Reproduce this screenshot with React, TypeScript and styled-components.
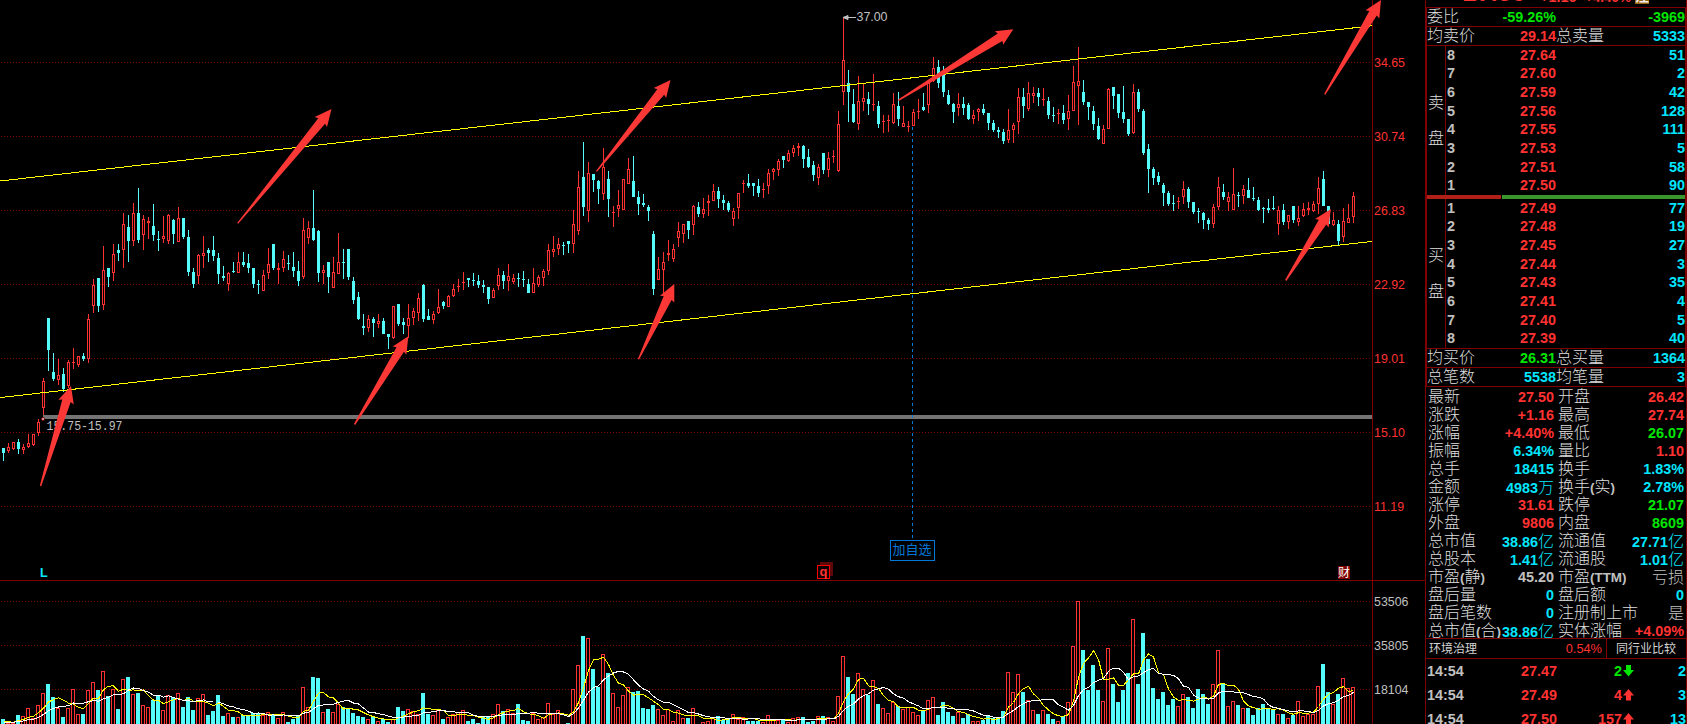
import React from "react";
import styled, { createGlobalStyle } from "styled-components";

const C = {
  line: "#800000",
  red: "#ff3232",
  cyan: "#54fcfc",
  aqua: "#00e6ff",
  green: "#00e600",
  grey: "#c0c0c0",
  yellow: "#ffff00",
  arrow: "#fb3836",
  blue: "#0078d7",
};

const latin = `"Liberation Sans", Arial`;
const cjk = `"Noto Sans CJK SC", sans-serif`;

const GlobalStyle = createGlobalStyle`
  html, body { margin: 0; background: #000; overflow: hidden; }
  * { box-sizing: border-box; }
`;

/* ---------- chart data ---------- */

/* Each block lists candles as "kind high open/close-top body-bottom low", in thirds of a
   pixel below `top`. r = rising, c = falling. */
const candleBlocks: { top: number; rows: string }[] = [
  {
    top: 180,
    rows: `c 804 804 819 843,r 789 801 813 819,r 786 786 807 810,c 777 786 807 822,r 792 801 810 822,r 762 789 801 804,r 762 762 795 798,r 717 726 759 768,r 594 603 684 705,c 414 414 510 573,
c 519 576 597 603,r 537 585 600 615,c 564 582 627 636,r 540 546 618 624,r 504 546 549 567,r 528 528 555 561,c 519 528 537 543,r 402 417 537 549,r 297 315 378 399,c 294 294 378 396,
r 198 270 375 390,c 264 264 291 321,r 192 222 279 303,c 192 210 219 243,r 99 132 210 264,c 105 141 183 246,r 69 99 183 198,c 24 99 180 189,r 105 117 165 210,r 111 123 129 177,
c 72 138 165 183,c 153 177 180 213,r 108 168 177 189,r 102 105 183 192,c 117 120 162 192,r 81 114 186 186,c 114 114 171 177,c 150 171 276 288,c 264 276 312 324,r 222 225 288 312,
r 168 219 228 264,c 204 210 219 246,c 168 210 228 243,c 219 234 282 312,c 258 288 294 303,r 276 279 312 333,c 246 273 276 279,r 216 246 279 279,c 216 246 255 261,c 222 249 264 279,
c 264 264 312 324,c 300 312 315 342,r 270 285 333 333,r 204 252 279 297,c 192 192 264 270,r 249 264 270 312,r 213 237 264 276,c 225 249 252 270,c 216 261 273 291,c 243 273 303 318,
r 114 150 291 297,r 123 144 174 192,c 30 144 180 183,c 150 153 279 306,r 255 270 279 312,c 246 246 291 339,r 231 276 324 324,r 159 246 282 282,c 207 246 249 297,c 207 207 291 300,
c 291 303 360 372,c 336 351 417 420,c 402 438 444 465,r 405 417 444 456,c 411 417 429 471,r 402 423 432 444,c 414 423 462 462,c 462 462 471 507,r 378 378 474 477,c 372 372 432 438,
c 414 426 435 462,r 372 414 438 474,r 384 393 414 435,r 339 354 399 423,c 312 315 417 426,c 387 408 420 420,r 393 402 420 432,r 327 381 399 402,c 363 366 378 387,r 345 348 381 381,
r 312 327 348 351,r 297 318 321 336,r 276 306 309 330,c 294 294 300 321,c 279 300 303 318,c 285 303 315 324,c 300 315 321 339,c 321 321 357 372,r 324 330 354 354,r 264 285 318 330,
c 273 285 303 327,r 252 288 303 333,r 282 294 306 312,c 279 294 297 321,c 273 297 300 321,c 297 312 339 339,r 264 309 339 339,r 285 291 315 321,r 267 273 294 318,r 192 210 273 285,
r 168 207 216 231,r 174 192 207 225,c 186 195 198 225,c 183 183 192 219`,
  },
  {
    top: 100,
    rows: `r 330 372 432 459,r 213 261 393 405,c 126 231 321 348,r 186 219 333 366,c 222 222 240 276,c 240 243 267 312,r 144 201 282 300,c 213 237 297 351,r 318 336 339 381,r 270 315 327 351,
r 237 237 330 330,r 174 207 252 252,c 168 243 291 291,c 273 291 312 345,c 282 309 315 321,c 315 321 333 363,c 393 402 567 585,r 471 507 540 540,r 456 486 510 585,r 420 459 465 483,
r 432 447 477 486,r 366 393 414 441,r 372 372 402 429,c 363 363 390 417,r 315 318 375 405,c 306 321 342 351,r 294 327 342 354,r 285 303 309 348,r 252 273 303 303,c 261 273 297 324,
c 285 300 309 330,c 303 309 330 336,r 324 333 357 378,r 279 279 324 357,r 240 249 252 279,c 222 249 258 264,c 249 249 258 288,c 237 258 279 291,r 249 267 270 294,r 207 219 258 282,
r 204 207 216 240,r 177 183 210 228,c 168 168 180 204,r 150 159 183 186,r 135 144 159 171,r 129 138 144 168,c 135 138 177 204,c 147 171 201 204,c 183 195 225 243,r 192 201 234 255,
c 159 159 210 222,r 156 174 210 231,r 150 168 171 189,r 33 72 213 216`,
  },
  {
    top: 0,
    rows: `r 54 180 276 315,c 210 249 276 366,c 267 312 366 369,r 228 303 372 390,r 252 294 306 333,c 276 297 312 345,r 222 312 315 333,c 303 318 372 384,r 345 363 366 399,r 345 360 363 396,
r 279 312 369 372,c 276 318 357 378,r 318 369 381 381,r 363 378 381 396,r 327 336 378 378,r 297 333 336 357,c 279 321 330 333,r 249 249 315 339,r 171 204 243 246,c 180 201 249 264,
c 198 225 276 291,c 270 285 312 315,c 309 312 336 369,r 279 312 324 348,c 291 312 324 345,c 309 315 357 360,r 330 345 357 372,r 324 327 336 363,c 312 327 339 345,c 339 339 369 390,
c 360 369 390 396,c 381 390 396 414,c 387 396 423 432,r 327 390 420 429,r 369 375 390 429,r 264 291 366 402,c 264 291 318 354,r 246 279 327 333,r 261 279 288 309,c 264 279 291 318,
r 264 297 300 318,c 291 303 345 357,c 321 345 348 366,r 327 339 342 372,c 315 339 360 372,r 285 333 357 390,r 198 246 333 333,r 141 243 258 375,c 240 276 306 315,c 306 306 321 360,
c 318 333 372 390,c 354 378 417 420,r 375 387 432 432,r 264 267 387 387,c 261 261 288 327,c 282 282 339 354,c 258 336 357 369,c 357 357 402 408,r 252 276 399 402,c 267 276 327 336`,
  },
  {
    top: 50,
    rows: `c 177 183 309 315,c 282 297 357 429,c 351 357 384 405,c 366 378 396 405,c 399 405 429 468,c 423 429 462 468,c 435 459 462 483,r 441 453 456 477,r 393 417 441 462,c 411 417 456 474,
c 456 456 486 492,c 474 483 486 519,c 486 489 510 537,c 504 510 522 540,r 462 471 522 534,r 381 411 471 480,c 402 426 441 450,r 426 441 456 483,r 354 432 480 480,c 426 435 438 471,
r 405 417 438 462,c 384 420 444 444,c 411 444 447 453,c 441 450 480 483,c 471 474 477 519,c 447 474 480 489,c 438 474 477 480,r 468 480 522 555,c 462 480 516 525,r 495 495 516 537,
c 468 468 510 519,r 468 504 516 528,r 459 477 498 501,r 456 474 480 495,r 453 462 483 486,r 381 414 462 492,c 363 387 468 468,c 468 468 522 522,r 486 510 525 528,c 510 522 573 585,
r 474 513 561 576,r 462 504 519 519,r 426 438 501 519`,
  },
];

type Candle = { up: boolean; high: number; top: number; bottom: number; low: number };

const candles: Candle[] = candleBlocks.flatMap(({ top, rows }) =>
  rows.split(",").map((row) => {
    const [kind, ...v] = row.trim().split(" ");
    const [high, bodyTop, bottom, low] = v.map((n) => Math.round(Number(n) / 3) + top);
    return { up: kind === "r", high, top: bodyTop, bottom, low };
  }),
);

/* Bar tops in thirds of a pixel below y=560. */
const volumeRows = `c477 r489 r489 c465 r468 r444 r474 r435 r399 c372 c411 r444 c471 r444 r387 r462 c462 r390 r366 c390 r333 c408 r387 c447 r357 c351 r402 c399 r435 r441
c420 c405 r450 r405 c411 r399 c441 c411 c450 r414 r402 c465 c453 c405 c468 r459 c471 r471 c465 c468 c460 c460 r465 r456 c465 r474 r456 c486 c477 c465
r381 r441 c351 c354 r456 c447 r456 r432 c441 c445 c459 c468 c471 r477 c471 r483 c477 c486 r477 c441 c453 r447 r453 r462 c399 c462 r465 r450 c477 r471
r462 r456 r450 c483 c477 c489 c468 c468 r462 r432 c453 r447 r459 c432 c480 c483 r459 r477 r471 r429 r462 r450 r492 c489 r387 r315 c228 r234 c327 c381
r282 c339 r399 r441 r405 r381 c396 c393 c444 c447 c435 r447 r465 r447 r483 r450 r474 c474 r444 r492 r486 r483 r474 c468 c480 c477 r462 r477 r471 c483
c483 c483 r486 r465 r480 r480 c480 r486 r474 r471 c471 c486 c483 r468 c468 r471 r483 r408 r288 c351 c402 r339 r387 c405 r360 c432 r444 r459 r426 c438
r447 r441 r456 r465 c450 r420 r411 c465 c426 c456 c468 r456 c474 c462 r483 r483 c480 c466 c474 c474 c453 r336 r396 r342 c396 r420 r450 c462 r450 c462
c477 r483 c468 r426 r258 r123 c270 c390 c315 c390 r423 r264 c372 c426 c390 c339 r177 c372 c219 c297 c384 c417 c396 c435 c417 r438 r402 c411 c444 c387
c402 c432 r372 r270 c369 r438 r423 c435 r444 c444 c465 c444 c432 c444 c447 r462 c462 r474 c465 r423 r468 r462 r462 r378 c312 c396 r432 c402 r354 r384 r381`
  .split(/\s+/)
  .map((s) => ({ up: s[0] === "r", y: Number(s.slice(1)) / 3 - 21 }));

const PANE_VOL_H = 143;

const average = (n: number) =>
  volumeRows
    .map((_, i) => {
      let sum = 0;
      for (let k = 0; k < n; k++) sum += i - k >= 0 ? volumeRows[i - k].y : 141;
      return `${3.5 + i * 5},${(sum / n + 0.3).toFixed(2)}`;
    })
    .join(" ");

const arrows: [number, number, number, number][] = [
  [40.5, 486, 71, 386],
  [354.5, 424.5, 408.3, 336.3],
  [237.7, 223.3, 331.5, 109],
  [596.5, 171.3, 670.5, 80],
  [638.5, 359.3, 674.3, 284],
  [898.3, 100.3, 1013.3, 29.2],
  [1324.7, 94.3, 1381, 0],
  [1285.7, 280.5, 1330.8, 209],
];

const arrowPoints = ([x0, y0, x1, y1]: [number, number, number, number]) => {
  const len = Math.hypot(x1 - x0, y1 - y0);
  const ux = (x1 - x0) / len;
  const uy = (y1 - y0) / len;
  const at = (back: number, side: number) =>
    `${(x1 - ux * back - uy * side).toFixed(1)},${(y1 - uy * back + ux * side).toFixed(1)}`;
  return [at(len, -0.7), at(15.5, -4.4), at(16.8, -8), at(0, 0), at(16.8, 8), at(15.5, 4.4), at(len, 0.7)].join(" ");
};

/* ---------- layout ---------- */

const Screen = styled.div`
  position: relative;
  display: flex;
  width: 1687px;
  height: 724px;
  overflow: hidden;
  background: #000;
  color: ${C.grey};
  font: 12.4px ${latin}, ${cjk};
`;

const Charts = styled.main`
  display: flex;
  flex-direction: column;
  width: 1425px;
`;

const Pane = styled.section<{ $h: number; $rule?: boolean }>`
  display: flex;
  height: ${(p) => p.$h}px;
  border-bottom: ${(p) => (p.$rule ? `1px solid ${C.line}` : "none")};
`;

const Plot = styled.svg`
  display: block;
  flex: none;
`;

const Axis = styled.div<{ $color: string; $offset: number; $step: number }>`
  flex: 1;
  padding-left: 1px;
  border-left: 1px solid ${C.line};
  color: ${(p) => p.$color};
  span {
    display: block;
    height: ${(p) => p.$step}px;
    line-height: ${(p) => p.$step}px;
  }
  span:first-child {
    margin-top: ${(p) => p.$offset}px;
  }
`;

const Overlay = styled.svg`
  position: absolute;
  inset: 0;
  pointer-events: none;
`;

const Side = styled.aside`
  display: flex;
  flex-direction: column;
  width: 262px;
  height: 724px;
  overflow: hidden;
  border-left: 1px solid ${C.line};
  border-right: 1px solid ${C.line};
  font: bold 14.4px ${latin}, ${cjk};
`;

const Headline = styled.header`
  display: flex;
  flex: none;
  align-items: flex-end;
  height: 7px;
  padding-left: 37px;
  color: ${C.red};
  overflow: hidden;
`;

const HeadNum = styled.span<{ $size: number; $w: number; $drop: number }>`
  flex: none;
  width: ${(p) => p.$w}px;
  margin-bottom: ${(p) => p.$drop}px;
  font-size: ${(p) => p.$size}px;
  line-height: 1;
`;

const Badge = styled.span`
  flex: none;
  width: 14px;
  height: 14px;
  margin-bottom: 3px;
  background: #9c6410;
  color: #eee;
  font-size: 14px;
  line-height: 13px;
  overflow: hidden;
`;

const Book = styled.div`
  flex: none;
  height: 380px;
  border: 1px solid ${C.line};
`;

const Summary = styled.div<{ $ruled?: boolean }>`
  display: grid;
  grid-template-columns: 129px 1fr;
  height: ${(p) => (p.$ruled ? 20 : 19)}px;
  line-height: 18px;
  border-top: ${(p) => (p.$ruled ? `1px solid ${C.line}` : "none")};
  border-bottom: 1px solid ${C.line};
  white-space: nowrap;
`;

const Pair = styled.div`
  display: flex;
  justify-content: space-between;
`;

const Label = styled.span`
  font-weight: 300;
  font-size: 16px;
  color: #dedede;
  b {
    font-size: 13.4px;
    font-weight: 700;
    color: ${C.grey};
  }
`;

const Value = styled.span<{ $c: string }>`
  color: ${(p) => p.$c};
  i {
    font: 300 16px ${cjk};
    line-height: 1;
  }
`;

const Levels = styled.div`
  display: grid;
  grid-template-columns: 19px 1fr;
  height: 149px;
`;

const SideName = styled.div`
  display: flex;
  flex-direction: column;
  align-items: center;
  justify-content: center;
  gap: 20px;
  border-right: 1px solid ${C.line};
  font-size: 16px;
  font-weight: 300;
  line-height: 16px;
  color: #dedede;
`;

const LevelRows = styled.div`
  display: grid;
  grid-template-rows: repeat(8, 1fr);
`;

const Level = styled.div`
  display: grid;
  grid-template-columns: 20px 89px 1fr;
  align-items: center;
  padding: 0 0 1px 1px;
  span + span {
    text-align: right;
  }
`;

const Ratio = styled.div`
  display: grid;
  grid-template-columns: 74px 1fr;
  gap: 1px;
  height: 4px;
  i:first-child { background: #b02018; }
  i:last-child { background: #38962c; }
`;

const Stats = styled.div`
  flex: none;
  height: 251px;
  padding-top: 1px;
`;

const Stat = styled.div`
  display: grid;
  grid-template-columns: 126px 126px;
  column-gap: 4px;
  height: 18px;
  padding-left: 2px;
  line-height: 18px;
  white-space: nowrap;
`;

const Sector = styled.div`
  display: grid;
  grid-template-columns: 180px 1fr;
  flex: none;
  height: 21px;
  border: solid ${C.line};
  border-width: 1px 0;
  font-size: 12px;
  font-weight: 400;
  line-height: 20px;
  color: #d4d4d4;
  em {
    padding-right: 4px;
    font-style: normal;
    font-size: 12.8px;
    color: ${C.red};
  }
  > span {
    padding-left: 9px;
    border-left: 1px solid ${C.line};
  }
`;

const SectorName = styled.div`
  display: flex;
  justify-content: space-between;
  padding-left: 3px;
`;

const Tick = styled.div`
  display: grid;
  grid-template-columns: 50px 80px 65px 13px 1fr;
  align-items: center;
  flex: none;
  height: 24px;
  padding-left: 1px;
  color: ${C.grey};
  span + span,
  svg + span {
    text-align: right;
  }
`;

const Tint = styled.span<{ $c: string }>`
  color: ${(p) => p.$c};
`;

/* ---------- parts ---------- */

const GridLines = ({ ys }: { ys: number[] }) => (
  <g stroke="#7c0000" strokeDasharray="1 2" shapeRendering="crispEdges">
    {ys.map((y) => (
      <line key={y} x1={1} x2={1371} y1={y + 0.5} y2={y + 0.5} />
    ))}
  </g>
);

const CandleMark = ({ c, x }: { c: Candle; x: number }) => {
  const h = c.bottom - c.top;
  if (!c.up || h < 3)
    return (
      <g fill={c.up ? C.red : C.cyan}>
        <rect x={x} y={c.high} width={1} height={c.low - c.high} />
        <rect x={x - 1} y={c.top} width={3} height={h} />
      </g>
    );
  return (
    <g fill={C.red}>
      <rect x={x} y={c.high} width={1} height={c.top - c.high} />
      <rect x={x} y={c.bottom} width={1} height={Math.max(0, c.low - c.bottom)} />
      <rect x={x - 0.5} y={c.top + 0.5} width={2} height={h - 1} fill="none" stroke={C.red} />
    </g>
  );
};

const PricePlot = () => (
  <Plot width={1372} height={580} viewBox="0 0 1372 580">
    <GridLines ys={[62, 136, 210, 284, 358, 432, 506]} />
    <rect x={43} y={415} width={1329} height={4} fill="#747474" />
    <g shapeRendering="crispEdges">
      {candles.map((c, i) => (
        <CandleMark key={i} c={c} x={3 + i * 5} />
      ))}
      <path d="M0 181L1372 25.8M0 397.6L1372 241.4" stroke={C.yellow} fill="none" />
      <path d="M912.5 127V540" stroke={C.blue} strokeDasharray="3 3" />
    </g>
    <circle cx={43} cy={419} r={1.5} fill="#ddd" stroke="#800000" />
    <text x={46.5} y={430} fill={C.grey} fontFamily="Liberation Mono" fontSize={13.5} textLength={76} lengthAdjust="spacingAndGlyphs">
      15.75-15.97
    </text>
    <path d="M843 17.5H856M843 17.5L848 15.5V19.5Z" stroke={C.grey} fill={C.grey} />
    <text x={856.5} y={21} fill={C.grey} fontSize={12.4}>37.00</text>
    <rect x={890.5} y={540.5} width={44} height={20} fill="#000" stroke={C.blue} />
    <text x={892.5} y={554} fill={C.blue} fontSize={13}>加自选</text>
    <text x={40} y={577} fill={C.aqua} fontSize={12.5} fontWeight={700}>L</text>
    <rect x={820} y={562} width={13} height={14} fill="#600808" />
    <rect x={817.5} y={565.5} width={12} height={13} fill="#100000" stroke="#f00" />
    <text x={819.5} y={576} fill={C.red} fontSize={13} fontWeight={700}>q</text>
    <rect x={1338} y={566} width={12} height={13} fill="#800000" />
    <text x={1338} y={577} fill="#fff" fontSize={12}>财</text>
  </Plot>
);

const VolumePlot = () => (
  <Plot width={1372} height={PANE_VOL_H} viewBox={`0 0 1372 ${PANE_VOL_H}`} shapeRendering="crispEdges">
    <GridLines ys={[20, 64, 108]} />
    {volumeRows.map(({ up, y }, i) =>
      up ? (
        <rect key={i} x={1.5 + i * 5} y={Math.round(y) + 0.5} width={3} height={160} fill="#000" stroke={C.red} />
      ) : (
        <rect key={i} x={1 + i * 5} y={Math.round(y)} width={4} height={160} fill={C.cyan} />
      ),
    )}
    <polyline points={average(5)} fill="none" stroke={C.yellow} />
    <polyline points={average(10)} fill="none" stroke="#fff" />
  </Plot>
);

const DirectionIcon = ({ up }: { up: boolean }) => (
  <svg width={13} height={12} viewBox="0 0 13 12">
    <path
      d={up ? "M6.5 0L12 6.5H9V11.5H4V6.5H1Z" : "M6.5 11.5L12 5H9V0H4V5H1Z"}
      fill={up ? C.red : C.green}
    />
  </svg>
);

const asks: [number, string, string][] = [
  [8, "27.64", "51"], [7, "27.60", "2"], [6, "27.59", "42"], [5, "27.56", "128"],
  [4, "27.55", "111"], [3, "27.53", "5"], [2, "27.51", "58"], [1, "27.50", "90"],
];
const bids: [number, string, string][] = [
  [1, "27.49", "77"], [2, "27.48", "19"], [3, "27.45", "27"], [4, "27.44", "3"],
  [5, "27.43", "35"], [6, "27.41", "4"], [7, "27.40", "5"], [8, "27.39", "40"],
];

const OrderLevels = ({ name, rows }: { name: string; rows: typeof asks }) => (
  <Levels>
    <SideName>
      {[...name].map((ch) => (
        <span key={ch}>{ch}</span>
      ))}
    </SideName>
    <LevelRows>
      {rows.map(([n, price, qty]) => (
        <Level key={n}>
          <span>{n}</span>
          <Tint $c={C.red}>{price}</Tint>
          <Tint $c={C.aqua}>{qty}</Tint>
        </Level>
      ))}
    </LevelRows>
  </Levels>
);

type Cell = [string, string, string];

const stats: [Cell, Cell][] = [
  [["最新", "27.50", C.red], ["开盘", "26.42", C.red]],
  [["涨跌", "+1.16", C.red], ["最高", "27.74", C.red]],
  [["涨幅", "+4.40%", C.red], ["最低", "26.07", C.green]],
  [["振幅", "6.34%", C.aqua], ["量比", "1.10", C.red]],
  [["总手", "18415", C.aqua], ["换手", "1.83%", C.aqua]],
  [["金额", "4983万", C.aqua], ["换手(实)", "2.78%", C.aqua]],
  [["涨停", "31.61", C.red], ["跌停", "21.07", C.green]],
  [["外盘", "9806", C.red], ["内盘", "8609", C.green]],
  [["总市值", "38.86亿", C.aqua], ["流通值", "27.71亿", C.aqua]],
  [["总股本", "1.41亿", C.aqua], ["流通股", "1.01亿", C.aqua]],
  [["市盈(静)", "45.20", C.grey], ["市盈(TTM)", "亏损", C.grey]],
  [["盘后量", "0", C.aqua], ["盘后额", "0", C.aqua]],
  [["盘后笔数", "0", C.aqua], ["注册制上市", "是", C.grey]],
  [["总市值(合)", "38.86亿", C.aqua], ["实体涨幅", "+4.09%", C.red]],
];

const splitCjk = (s: string) => s.split(/([\u4e00-\u9fff]+)/).filter(Boolean);
const isCjk = (s: string) => /[\u4e00-\u9fff]/.test(s);

const Field = ({ cell: [label, value, color] }: { cell: Cell }) => (
  <Pair>
    <Label>{splitCjk(label).map((s, i) => (isCjk(s) ? s : <b key={i}>{s}</b>))}</Label>
    <Value $c={color}>{splitCjk(value).map((s, i) => (isCjk(s) ? <i key={i}>{s}</i> : s))}</Value>
  </Pair>
);

const ticks: [string, string, string, boolean, string][] = [
  ["14:54", "27.47", "2", false, "2"],
  ["14:54", "27.49", "4", true, "3"],
  ["14:54", "27.50", "157", true, "13"],
];

export default function App() {
  return (
    <Screen>
      <GlobalStyle />
      <Charts>
        <Pane $h={581} $rule>
          <PricePlot />
          <Axis $color={C.red} $offset={26} $step={74}>
            {["34.65", "30.74", "26.83", "22.92", "19.01", "15.10", "11.19"].map((t) => (
              <span key={t}>{t}</span>
            ))}
          </Axis>
        </Pane>
        <Pane $h={PANE_VOL_H}>
          <VolumePlot />
          <Axis $color={C.grey} $offset={-1} $step={44}>
            {["53506", "35805", "18104"].map((t) => (
              <span key={t}>{t}</span>
            ))}
          </Axis>
        </Pane>
      </Charts>
      <Side>
        <Headline>
          <HeadNum $size={25} $w={77} $drop={2}>27.50</HeadNum>
          <HeadNum $size={14.4} $w={45} $drop={3}>+1.16</HeadNum>
          <HeadNum $size={13.4} $w={50} $drop={3}>+4.40%</HeadNum>
          <Badge>注</Badge>
        </Headline>
        <Book>
          <Summary>
            <Field cell={["委比", "-59.26%", C.green]} />
            <Field cell={["", "-3969", C.green]} />
          </Summary>
          <Summary>
            <Field cell={["均卖价", "29.14", C.red]} />
            <Field cell={["总卖量", "5333", C.aqua]} />
          </Summary>
          <OrderLevels name="卖盘" rows={asks} />
          <Ratio>
            <i />
            <i />
          </Ratio>
          <OrderLevels name="买盘" rows={bids} />
          <Summary $ruled>
            <Field cell={["均买价", "26.31", C.green]} />
            <Field cell={["总买量", "1364", C.aqua]} />
          </Summary>
          <Summary>
            <Field cell={["总笔数", "5538", C.aqua]} />
            <Field cell={["均笔量", "3", C.aqua]} />
          </Summary>
        </Book>
        <Stats>
          {stats.map(([a, b]) => (
            <Stat key={a[0]}>
              <Field cell={a} />
              <Field cell={b} />
            </Stat>
          ))}
        </Stats>
        <Sector>
          <SectorName>
            环境治理<em>0.54%</em>
          </SectorName>
          <span>同行业比较</span>
        </Sector>
        {ticks.map(([time, price, qty, up, n], i) => (
          <Tick key={i}>
            <span>{time}</span>
            <Tint $c={C.red}>{price}</Tint>
            <Tint $c={up ? C.red : C.green}>{qty}</Tint>
            <DirectionIcon up={up} />
            <Tint $c={C.aqua}>{n}</Tint>
          </Tick>
        ))}
      </Side>
      <Overlay width={1687} height={724} viewBox="0 0 1687 724">
        {arrows.map((a, i) => (
          <polygon key={i} points={arrowPoints(a)} fill={C.arrow} />
        ))}
      </Overlay>
    </Screen>
  );
}
